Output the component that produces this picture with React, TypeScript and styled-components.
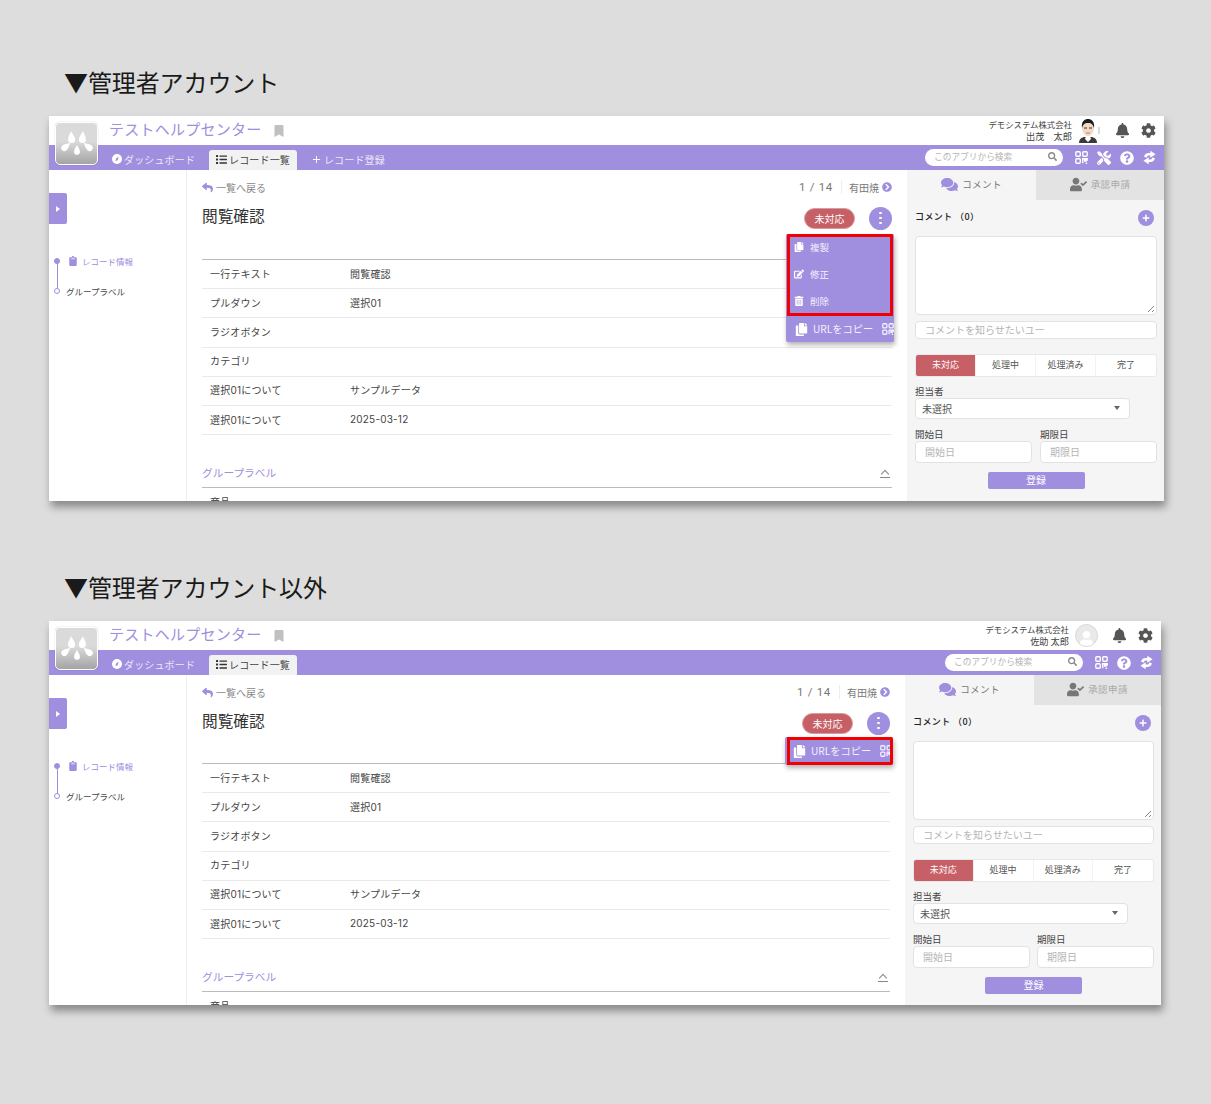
import styled, { createGlobalStyle } from 'styled-components';
import {
  FaBell, FaBookmark, FaChevronCircleRight, FaClipboard, FaCog, FaComments, FaCopy, FaEdit,
  FaList, FaPlus, FaQuestionCircle, FaReply, FaSearch, FaTools, FaTrashAlt, FaUser, FaUserCheck,
} from 'react-icons/fa';
import { FiPlus } from 'react-icons/fi';

const purple = '#a08ede';

const GlobalStyle = createGlobalStyle`
  * { box-sizing: border-box; }
  html, body { margin: 0; background: #dddddd; }
  body {
    font-family: "Noto Sans CJK JP", "Noto Sans", sans-serif;
    color: #444;
  }
`;

const Page = styled.div`
  width: 1211px;
  height: 1104px;
  padding: 66px 0 0 49px;
  overflow: hidden;
`;

const Heading = styled.h2`
  margin: 0 0 16px 15px;
  height: 34px;
  font-size: 24px;
  line-height: 32px;
  font-weight: 400;
  letter-spacing: -0.1px;
  color: #1a1a1a;
`;

const Windows = styled.div`
  display: flex;
  flex-direction: column;
  gap: 70px;
`;

const Block = styled.section``;

const AppWindow = styled.div<{ $width: number; $height: number }>`
  position: relative;
  width: ${(p) => p.$width}px;
  height: ${(p) => p.$height}px;
  display: flex;
  flex-direction: column;
  background: #fff;
  box-shadow: 2px 6px 8px rgba(0, 0, 0, 0.38);
`;

const Logo = styled.div`
  position: absolute;
  top: 6px;
  left: 6px;
  width: 43px;
  height: 43px;
  border: 1.5px solid #fff;
  border-radius: 5px;
  background: linear-gradient(#dadada 0 45%, #a4a4a4);
  display: flex;
  align-items: center;
  justify-content: center;
  box-shadow: 0 0 1px rgba(0, 0, 0, 0.4);
  z-index: 2;
`;

const TopBar = styled.header`
  height: 29px;
  display: flex;
  align-items: center;
  padding: 0 8px 0 60px;
`;

const AppTitle = styled.h1`
  margin: 0 0 4px;
  font-size: 15px;
  line-height: 1;
  font-weight: 400;
  letter-spacing: 0.25px;
  color: ${purple};
`;

const Bookmark = styled.span`
  display: flex;
  margin-left: 11px;
  font-size: 12px;
  color: #c0c0c0;
`;

const UserBox = styled.div`
  margin-left: auto;
  display: flex;
  align-items: center;
`;

const UserNames = styled.div`
  text-align: right;
  font-size: 8.4px;
  line-height: 12.5px;
  color: #444;
  margin-top: -1px;
`;

const UserName = styled.div`
  font-size: 9.2px;
`;

const AvatarSlot = styled.div`
  width: 26px;
  height: 26px;
  margin: 0 2px 0 4px;
  display: flex;
  align-items: center;
  justify-content: center;
`;

const EmptyAvatar = styled.div`
  width: 23px;
  height: 23px;
  border-radius: 50%;
  background: #e9e9e9;
  border: 1px solid #d8d8d8;
  color: #fff;
  font-size: 15px;
  display: flex;
  align-items: flex-end;
  justify-content: center;
  overflow: hidden;
`;

const TopIcon = styled.span`
  display: flex;
  margin-left: 11px;
  color: #555;
  font-size: 15px;
`;

const NavBar = styled.nav`
  height: 25px;
  background: ${purple};
  display: flex;
  align-items: flex-end;
  padding: 0 8px 0 56px;
`;

const NavItem = styled.div<{ $active?: boolean }>`
  height: 20px;
  display: flex;
  align-items: center;
  gap: 2px;
  padding: 0 7px 2px;
  margin-right: 7px;
  border-radius: 3px 3px 0 0;
  font-size: 10px;
  letter-spacing: 0.15px;
  background: ${(p) => (p.$active ? '#f2f2f2' : 'transparent')};
  color: ${(p) => (p.$active ? '#444' : '#ece8fa')};
  svg { font-size: 11px; color: ${(p) => (p.$active ? '#333' : '#fff')}; }
`;

const NavTools = styled.div`
  margin-left: auto;
  height: 25px;
  display: flex;
  align-items: center;
  gap: 9px;
  color: #fff;
  font-size: 14px;
  svg { display: block; }
`;

const SearchBox = styled.div`
  width: 138px;
  height: 17px;
  margin: 0 3px 1px 0;
  border-radius: 9px;
  background: #fff;
  display: flex;
  align-items: center;
  justify-content: space-between;
  padding: 0 6px 1px 9px;
  font-size: 8.7px;
  color: #b5b5b5;
  svg { font-size: 9px; color: #888; }
`;

const Body = styled.div`
  flex: 1;
  min-height: 0;
  display: flex;
  overflow: hidden;
`;

const Side = styled.aside`
  position: relative;
  width: 138px;
  flex: none;
  border-right: 1px solid #eeeeee;
  padding-top: 23px;
`;

const SideToggle = styled.div`
  width: 18px;
  height: 31px;
  background: ${purple};
  border-radius: 0 2px 2px 0;
  display: flex;
  align-items: center;
  justify-content: center;
  &::before {
    content: '';
    border-left: 4px solid #fff;
    border-top: 3.5px solid transparent;
    border-bottom: 3.5px solid transparent;
  }
`;

const Steps = styled.div`
  position: relative;
  margin: 29px 0 0 5px;
  display: flex;
  flex-direction: column;
  gap: 15px;
  &::before {
    content: '';
    position: absolute;
    left: 2.5px;
    top: 8px;
    width: 1.5px;
    height: 29px;
    background: ${purple};
  }
`;

const Step = styled.div<{ $active?: boolean }>`
  position: relative;
  height: 15px;
  display: flex;
  align-items: center;
  font-size: 8.5px;
  color: ${(p) => (p.$active ? purple : '#444')};
  svg { font-size: 10px; margin: 0 4px 0 8px; }
`;

const StepDot = styled.i<{ $active?: boolean }>`
  width: 6px;
  height: 6px;
  flex: none;
  border-radius: 50%;
  border: 1px solid ${purple};
  background: ${(p) => (p.$active ? purple : '#fff')};
  margin-right: ${(p) => (p.$active ? 0 : 6)}px;
`;

const Main = styled.main`
  flex: 1;
  min-width: 0;
  padding: 9px 15px 0 15px;
`;

const CrumbRow = styled.div`
  height: 16px;
  display: flex;
  align-items: center;
  font-size: 10px;
  color: #888;
`;

const BackLink = styled.span`
  display: flex;
  align-items: center;
  gap: 3px;
  svg { color: ${purple}; font-size: 11px; }
`;

const Pager = styled.span`
  margin-left: auto;
  font-family: Roboto, sans-serif;
  font-size: 11.5px;
  letter-spacing: 0.7px;
  color: #777;
  padding-right: 8px;
  border-right: 1px solid #eee;
  margin-right: 7px;
`;

const NextLink = styled.span`
  display: flex;
  align-items: center;
  gap: 3px;
  color: #777;
  svg { color: ${purple}; font-size: 10px; }
`;

const TitleRow = styled.div`
  position: relative;
  height: 24px;
  margin-top: 11px;
  display: flex;
  align-items: center;
`;

const RecordTitle = styled.h3`
  margin: 0 0 3px;
  font-size: 15.7px;
  line-height: 1.3;
  font-weight: 400;
  color: #333;
`;

const StatusPill = styled.span`
  margin: 1px 0 0 auto;
  width: 51px;
  height: 21px;
  padding-bottom: 1px;
  border-radius: 11px;
  background: #c65f66;
  border: 1px solid #d89a9e;
  color: #fff;
  font-size: 10px;
  display: flex;
  align-items: center;
  justify-content: center;
`;

const Kebab = styled.span`
  width: 23px;
  height: 23px;
  margin-left: 14px;
  border-radius: 50%;
  background: ${purple};
  display: flex;
  flex-direction: column;
  align-items: center;
  justify-content: center;
  gap: 2.5px;
  i { width: 2.5px; height: 2.5px; border-radius: 50%; background: #fff; }
`;

const Menu = styled.div<{ $compact?: boolean }>`
  position: absolute;
  top: ${(p) => (p.$compact ? 26 : 28)}px;
  right: ${(p) => (p.$compact ? -3 : -2)}px;
  width: 108px;
  background: ${purple};
  border-radius: 2px;
  box-shadow: 1px 3px 5px rgba(0, 0, 0, 0.3);
  overflow: hidden;
  z-index: 3;
`;

const MarkedGroup = styled.div`
  position: relative;
  height: 82px;
  padding-left: 8px;
  &::after {
    content: '';
    position: absolute;
    inset: 0 1px;
    border: 3px solid #f00000;
  }
`;

const MenuItem = styled.div`
  height: 27px;
  display: flex;
  align-items: center;
  gap: 6px;
  padding-bottom: 1px;
  font-size: 9.5px;
  color: #f3f0ff;
  svg { font-size: 10px; color: #fff; }
`;

const CopyRow = styled.div<{ $marked?: boolean }>`
  position: relative;
  height: ${(p) => (p.$marked ? 28 : 26)}px;
  display: flex;
  align-items: center;
  padding-left: 9px;
  font-size: 10.2px;
  color: #f3f0ff;
  white-space: nowrap;
  ${(p) => p.$marked && `
    margin-left: 2px;
    padding-left: 6px;
    &::after {
      content: '';
      position: absolute;
      inset: 0;
      border: 3px solid #f00000;
    }
  `}
  span { margin: 0 9px 2px 5px; }
  svg { flex: none; }
`;

const Fields = styled.div<{ $compact?: boolean }>`
  margin-top: ${(p) => (p.$compact ? 28 : 29)}px;
  border-top: 1px solid #bbb;
`;

const FieldRow = styled.div`
  height: 29.2px;
  display: grid;
  grid-template-columns: 140px 1fr;
  align-items: center;
  padding: 0 0 2px 8px;
  border-bottom: 1px solid #eaeaea;
  font-family: Inter, "Noto Sans CJK JP", sans-serif;
  font-size: 10px;
  letter-spacing: 0.2px;
  color: #444;
`;

const GroupLabel = styled.div`
  margin-top: 25px;
  height: 28px;
  display: flex;
  align-items: center;
  justify-content: space-between;
  padding: 0 2px 2px 0;
  border-bottom: 1px solid #bbb;
  font-size: 10.7px;
  color: ${purple};
`;

const Chevron = styled.span`
  width: 10px;
  height: 8px;
  border-bottom: 1px solid #888;
  position: relative;
  margin-top: 3px;
  &::before {
    content: '';
    position: absolute;
    left: 2px;
    top: 1px;
    width: 5px;
    height: 5px;
    border-left: 1px solid #888;
    border-top: 1px solid #888;
    transform: rotate(45deg);
  }
`;

const GroupItem = styled.div`
  padding: 6px 0 0 8px;
  font-size: 10px;
  color: #444;
`;

const Panel = styled.aside<{ $width: number }>`
  width: ${(p) => p.$width}px;
  flex: none;
  background: #f5f5f5;
  display: flex;
  flex-direction: column;
`;

const PanelTabs = styled.div`
  height: 30px;
  flex: none;
  display: grid;
  grid-template-columns: 129px 1fr;
`;

const PanelTab = styled.div<{ $active?: boolean }>`
  display: flex;
  align-items: center;
  justify-content: center;
  gap: 4px;
  padding-bottom: 2px;
  font-size: 9.5px;
  letter-spacing: 0.4px;
  background: ${(p) => (p.$active ? '#f5f5f5' : '#e3e3e3')};
  color: ${(p) => (p.$active ? '#777' : '#aaa')};
  svg { font-size: 17px; color: ${(p) => (p.$active ? purple : '#777')}; }
`;

const PanelBody = styled.div`
  padding: 0 7px 0 8px;
  display: flex;
  flex-direction: column;
`;

const CommentHead = styled.div`
  height: 36px;
  display: flex;
  align-items: center;
  justify-content: space-between;
  padding: 0 3px 4px 0;
  font-size: 9px;
  font-weight: 500;
  letter-spacing: 0.4px;
  color: #222;
`;

const PlusButton = styled.span`
  width: 16px;
  height: 16px;
  margin-top: 4px;
  border-radius: 50%;
  background: ${purple};
  color: #fff;
  display: flex;
  align-items: center;
  justify-content: center;
  font-size: 8px;
`;

const CommentArea = styled.div`
  position: relative;
  height: 79px;
  background: #fff;
  border: 1px solid #e2e2e2;
  border-radius: 4px;
  &::after {
    content: '';
    position: absolute;
    right: 2px;
    bottom: 2px;
    width: 7px;
    height: 7px;
    background: repeating-linear-gradient(135deg, transparent 0 2px, #888 2px 3px);
    clip-path: polygon(100% 0, 100% 100%, 0 100%);
  }
`;

const FieldBox = styled.div<{ $height?: number }>`
  height: ${(p) => p.$height ?? 22}px;
  background: #fff;
  border: 1px solid #e2e2e2;
  border-radius: 4px;
  display: flex;
  align-items: center;
  padding: 0 9px 2px;
  font-size: 10px;
  color: #b5b5b5;
`;

const MentionBox = styled(FieldBox)`
  margin-top: 6px;
`;

const StatusTabs = styled.div`
  margin-top: 15px;
  height: 23px;
  display: grid;
  grid-template-columns: repeat(4, 1fr);
  background: #fff;
  border: 1px solid #e8e8e8;
  border-radius: 3px;
  overflow: hidden;
`;

const StatusTab = styled.div<{ $active?: boolean }>`
  display: flex;
  align-items: center;
  justify-content: center;
  padding-bottom: 2px;
  font-size: 9px;
  color: ${(p) => (p.$active ? '#fff' : '#555')};
  background: ${(p) => (p.$active ? '#c65f66' : 'transparent')};
  border-right: 1px solid #f2f2f2;
  &:last-child { border-right: 0; }
`;

const FieldLabel = styled.div`
  height: 14px;
  line-height: 14px;
  font-size: 9.5px;
  color: #444;
`;

const OwnerLabel = styled(FieldLabel)`
  margin-top: 7px;
`;

const OwnerSelect = styled(FieldBox)`
  width: 215px;
  justify-content: space-between;
  padding: 0 9px 1px 6px;
  color: #555;
  &::after {
    content: '';
    border-top: 4px solid #666;
    border-left: 3px solid transparent;
    border-right: 3px solid transparent;
  }
`;

const DateGrid = styled.div`
  margin-top: 8px;
  display: grid;
  grid-template-columns: 117px 117px;
  justify-content: space-between;
`;

const SaveButton = styled.button`
  align-self: center;
  margin-top: 9px;
  width: 97px;
  height: 17px;
  padding: 0 0 2px;
  border: 0;
  border-radius: 2px;
  background: ${purple};
  color: #fff;
  font: inherit;
  font-size: 10px;
`;

const QrIcon = ({ size = 13 }: { size?: number }) => (
  <svg width={size} height={size} viewBox="0 0 16 16" fill="none" stroke="currentColor" strokeWidth="1.7">
    <rect x="1" y="1" width="5.5" height="5.5" rx="1.2" />
    <rect x="9.5" y="1" width="5.5" height="5.5" rx="1.2" />
    <rect x="1" y="9.5" width="5.5" height="5.5" rx="1.2" />
    <path d="M9.5 15V9.5h2.4v3h1.6V9.5H15v2.5" />
    <path d="M13 15h2" />
  </svg>
);

const SyncIcon = () => (
  <svg width="13" height="15" viewBox="0 0 16 18" fill="currentColor">
    <path d="M1.5 8.5C1.5 5 4 3.5 7 3.5h2V.8L15.5 5 9 9.2V6.5H7.5c-1.8 0-2.6.8-2.6 2.5z" />
    <path d="M14.5 9.5c0 3.5-2.5 5-5.5 5H7v2.7L.5 13 7 8.8v2.7h1.5c1.8 0 2.6-.8 2.6-2.5z" />
  </svg>
);

const CompassIcon = () => (
  <svg width="10" height="10" viewBox="0 0 16 16">
    <circle cx="8" cy="8" r="8" fill="#fff" />
    <path d="M10.5 4.5 9.4 9.4 5.5 11.5l1.2-4.8z" fill={purple} />
  </svg>
);

const dropPath = 'M0-7C1.6-3.5 3.6-1.6 3.6 1.6a3.6 3.6 0 0 1-7.2 0C-3.6-1.6-1.6-3.5 0-7z';

const LogoMark = () => (
  <svg width="32" height="25" viewBox="0 0 32 25" fill="#fff">
    <path d={dropPath} transform="translate(10.5 7) rotate(-4) scale(.98)" />
    <path d={dropPath} transform="translate(21.5 7) rotate(4) scale(.98)" />
    <path d={dropPath} transform="translate(4.5 16) rotate(50) scale(.88)" />
    <path d={dropPath} transform="translate(27.5 16) rotate(-50) scale(.88)" />
    <path d={dropPath} transform="translate(16 19.5) scale(.82)" />
  </svg>
);

const PortraitIcon = () => (
  <svg width="22" height="25" viewBox="0 0 22 25">
    <path d="M1 25c0-4 3-6 6-6h6c3 0 6 2 6 6z" fill="#3a3a3a" />
    <path d="M8 18h4l1 3-3 3-3-3z" fill="#fff" />
    <ellipse cx="10" cy="10" rx="6" ry="8" fill="#f3d9c4" />
    <path d="M4 10C3 3 7 1 10 1s7 2 6 9c-1-3-2-5-6-5s-5 2-6 5z" fill="#1d1d1d" />
    <path d="M6 10h3M11 10h3" stroke="#333" strokeWidth="1" />
    <path d="M8 15h4" stroke="#a66" strokeWidth="0.8" />
    <path d="M21 9v7" stroke="#999" strokeWidth="0.7" />
  </svg>
);

const rows = [
  ['一行テキスト', '閲覧確認'],
  ['プルダウン', '選択01'],
  ['ラジオボタン', ''],
  ['カテゴリ', ''],
  ['選択01について', 'サンプルデータ'],
  ['選択01について', '2025-03-12'],
];

type RecordWindowProps = {
  admin: boolean;
  width: number;
  height: number;
  panelWidth: number;
  company: string;
  userName: string;
};

const RecordWindow = ({ admin, width, height, panelWidth, company, userName }: RecordWindowProps) => (
  <AppWindow $width={width} $height={height}>
    <Logo><LogoMark /></Logo>
    <TopBar>
      <AppTitle>テストヘルプセンター</AppTitle>
      <Bookmark><FaBookmark /></Bookmark>
      <UserBox>
        <UserNames>
          <div>{company}</div>
          <UserName>{userName}</UserName>
        </UserNames>
        <AvatarSlot>
          {admin ? <PortraitIcon /> : <EmptyAvatar><FaUser /></EmptyAvatar>}
        </AvatarSlot>
        <TopIcon><FaBell /></TopIcon>
        <TopIcon><FaCog /></TopIcon>
      </UserBox>
    </TopBar>
    <NavBar>
      <NavItem><CompassIcon />ダッシュボード</NavItem>
      <NavItem $active><FaList />レコード一覧</NavItem>
      {admin && <NavItem><FiPlus />レコード登録</NavItem>}
      <NavTools>
        <SearchBox>このアプリから検索<FaSearch /></SearchBox>
        <QrIcon />
        {admin && <FaTools />}
        <FaQuestionCircle />
        <SyncIcon />
      </NavTools>
    </NavBar>
    <Body>
      <Side>
        <SideToggle />
        <Steps>
          <Step $active><StepDot $active /><FaClipboard />レコード情報</Step>
          <Step><StepDot />グループラベル</Step>
        </Steps>
      </Side>
      <Main>
        <CrumbRow>
          <BackLink><FaReply />一覧へ戻る</BackLink>
          <Pager>1 / 14</Pager>
          <NextLink>有田焼<FaChevronCircleRight /></NextLink>
        </CrumbRow>
        <TitleRow>
          <RecordTitle>閲覧確認</RecordTitle>
          <StatusPill>未対応</StatusPill>
          <Kebab><i /><i /><i /></Kebab>
          <Menu $compact={!admin}>
            {admin && (
              <MarkedGroup>
                <MenuItem><FaCopy />複製</MenuItem>
                <MenuItem><FaEdit />修正</MenuItem>
                <MenuItem><FaTrashAlt />削除</MenuItem>
              </MarkedGroup>
            )}
            <CopyRow $marked={!admin}>
              <FaCopy size={13} color="#fff" />
              <span>URLをコピー</span>
              <QrIcon size={12} />
            </CopyRow>
          </Menu>
        </TitleRow>
        <Fields $compact={!admin}>
          {rows.map(([label, value], i) => (
            <FieldRow key={i}>
              <span>{label}</span>
              <span>{value}</span>
            </FieldRow>
          ))}
        </Fields>
        <GroupLabel>グループラベル<Chevron /></GroupLabel>
        <GroupItem>商品</GroupItem>
      </Main>
      <Panel $width={panelWidth}>
        <PanelTabs>
          <PanelTab $active><FaComments />コメント</PanelTab>
          <PanelTab><FaUserCheck />承認申請</PanelTab>
        </PanelTabs>
        <PanelBody>
          <CommentHead>コメント （0）<PlusButton><FaPlus /></PlusButton></CommentHead>
          <CommentArea />
          <MentionBox $height={18}>コメントを知らせたいユー</MentionBox>
          <StatusTabs>
            <StatusTab $active>未対応</StatusTab>
            <StatusTab>処理中</StatusTab>
            <StatusTab>処理済み</StatusTab>
            <StatusTab>完了</StatusTab>
          </StatusTabs>
          <OwnerLabel>担当者</OwnerLabel>
          <OwnerSelect $height={21}>未選択</OwnerSelect>
          <DateGrid>
            <div>
              <FieldLabel>開始日</FieldLabel>
              <FieldBox>開始日</FieldBox>
            </div>
            <div>
              <FieldLabel>期限日</FieldLabel>
              <FieldBox>期限日</FieldBox>
            </div>
          </DateGrid>
          <SaveButton>登録</SaveButton>
        </PanelBody>
      </Panel>
    </Body>
  </AppWindow>
);

export default function App() {
  return (
    <Page>
      <GlobalStyle />
      <Windows>
        <Block>
          <Heading>▼管理者アカウント</Heading>
          <RecordWindow admin width={1115} height={385} panelWidth={257} company="デモシステム株式会社" userName="出茂　太郎" />
        </Block>
        <Block>
          <Heading>▼管理者アカウント以外</Heading>
          <RecordWindow admin={false} width={1112} height={384} panelWidth={256} company="デモシステム株式会社" userName="佐助 太郎" />
        </Block>
      </Windows>
    </Page>
  );
}
